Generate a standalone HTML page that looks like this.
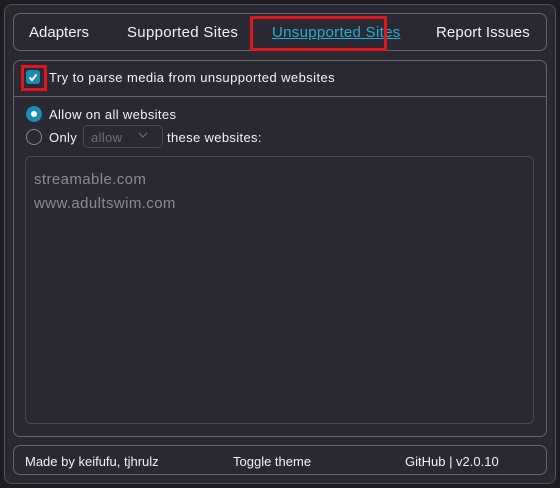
<!DOCTYPE html>
<html><head><style>
*{box-sizing:border-box;margin:0;padding:0}
body{width:560px;height:488px;background:#1d1d21;font-family:"Liberation Sans",sans-serif;color:#f2f2f2;position:relative;overflow:hidden}
.win{position:absolute;left:4px;top:4px;width:552px;height:480px;background:#2a2933;border:1px solid #55545c;border-radius:8px}
.box{position:absolute;border:1px solid #66656d;border-radius:7px}
.t{position:absolute;font-size:15px;white-space:nowrap;letter-spacing:0.3px}
.s{position:absolute;font-size:13px;white-space:nowrap;letter-spacing:0.35px}
.red{position:absolute;border:3px solid #e0161c}
</style></head><body>
<div class="win"></div>
<div class="box" style="left:13px;top:13px;width:534px;height:38px"></div>
<div class="t" style="left:29px;top:24px;letter-spacing:0">Adapters</div>
<div class="t" style="left:127px;top:24px">Supported Sites</div>
<div class="t" style="left:272px;top:24px;color:#1fb1d6;text-decoration:underline">Unsupported Sites</div>
<div class="red" style="left:250px;top:16px;width:137px;height:35px"></div>
<div class="t" style="left:436px;top:24px;letter-spacing:0.1px">Report Issues</div>

<div class="box" style="left:13px;top:60px;width:534px;height:377px"></div>
<div style="position:absolute;left:14px;top:96px;width:532px;height:1px;background:#66656d"></div>
<div style="position:absolute;left:26px;top:70px;width:14px;height:14px;background:#1b8cae;border-radius:3px"></div>
<svg style="position:absolute;left:26px;top:70px" width="14" height="14"><path d="M3.5 7.5 L6 10 L10.5 4.5" stroke="#fff" stroke-width="2" fill="none"/></svg>
<div class="red" style="left:21px;top:65px;width:26px;height:26px"></div>
<div class="s" style="left:49px;top:70px;letter-spacing:0.42px">Try to parse media from unsupported websites</div>

<div style="position:absolute;left:26px;top:106px;width:16px;height:16px;border-radius:50%;background:#1b8cae"></div>
<div style="position:absolute;left:31px;top:111px;width:6px;height:6px;border-radius:50%;background:#fff"></div>
<div class="s" style="left:49px;top:107px">Allow on all websites</div>
<div style="position:absolute;left:26px;top:129px;width:16px;height:16px;border-radius:50%;border:1px solid #8a8990"></div>
<div class="s" style="left:49px;top:130px">Only</div>
<div style="position:absolute;left:83px;top:125px;width:80px;height:23px;border:1px solid #4a4952;border-radius:5px"></div>
<div class="s" style="left:91px;top:130px;color:#6f6e76">allow</div>
<svg style="position:absolute;left:138px;top:131px" width="10" height="8"><path d="M1 2 L5 6 L9 2" stroke="#6f6e76" stroke-width="1.2" fill="none"/></svg>
<div class="s" style="left:167px;top:130px">these websites:</div>

<div class="box" style="left:25px;top:156px;width:509px;height:268px;border-color:#4a4952;border-radius:6px"></div>
<div class="t" style="left:34px;top:171px;color:#8b8a91;letter-spacing:0.4px">streamable.com</div>
<div class="t" style="left:34px;top:195px;color:#8b8a91;letter-spacing:0.4px">www.adultswim.com</div>

<div class="box" style="left:13px;top:445px;width:534px;height:30px"></div>
<div class="s" style="left:25px;top:454px;letter-spacing:0">Made by keifufu, tjhrulz</div>
<div class="s" style="left:233px;top:454px;letter-spacing:0">Toggle theme</div>
<div class="s" style="left:405px;top:454px;letter-spacing:0">GitHub | v2.0.10</div>
</body></html>
